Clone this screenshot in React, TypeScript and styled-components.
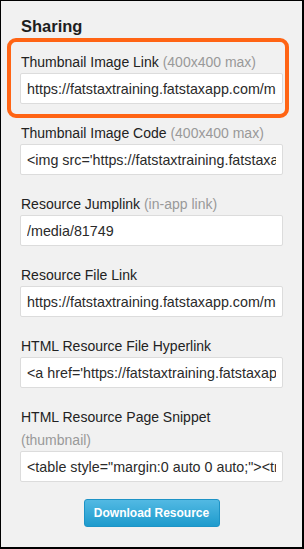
import React from 'react';
import styled, {createGlobalStyle} from 'styled-components';

const GlobalStyle = createGlobalStyle`
  html, body {
    margin: 0;
    padding: 0;
    background: #000;
  }
  body {
    font-family: "Liberation Sans", Arial, Helvetica, sans-serif;
  }
`

interface FieldData {
    label: string
    hint?: string
    value: string
    hintOnNewLine?: boolean
    highlighted?: boolean
}

const fields: FieldData[] = [
    {
        label: 'Thumbnail Image Link',
        hint: '(400x400 max)',
        value: 'https://fatstaxtraining.fatstaxapp.com/media/81749/thumbnail',
        highlighted: true,
    },
    {
        label: 'Thumbnail Image Code',
        hint: '(400x400 max)',
        value: "<img src='https://fatstaxtraining.fatstaxapp.com/media/81749/thumbnail' />",
    },
    {label: 'Resource Jumplink', hint: '(in-app link)', value: '/media/81749'},
    {label: 'Resource File Link', value: 'https://fatstaxtraining.fatstaxapp.com/media/81749/file'},
    {
        label: 'HTML Resource File Hyperlink',
        value: "<a href='https://fatstaxtraining.fatstaxapp.com/media/81749/file'>",
    },
    {
        label: 'HTML Resource Page Snippet',
        hint: '(thumbnail)',
        hintOnNewLine: true,
        value: '<table style="margin:0 auto 0 auto;"><tr><td>',
    },
]

const Field = ({field}: { field: FieldData }) => {
    const body = (
        <>
            <Label>
                {field.label}
                {field.hint && (field.hintOnNewLine ? <HintBlock>{field.hint}</HintBlock> : <Hint> {field.hint}</Hint>)}
            </Label>
            <TextInput type="text" readOnly value={field.value}/>
        </>
    )
    if (field.highlighted) return <Highlight>{body}</Highlight>
    return <FieldBox>{body}</FieldBox>
}

export default function App() {
    return (
        <>
            <GlobalStyle/>
            <Panel>
                <Title>Sharing</Title>
                <Fields>
                    {fields.map(f => <Field key={f.label} field={f}/>)}
                </Fields>
                <ButtonRow>
                    <DownloadButton type="button">Download Resource</DownloadButton>
                </ButtonRow>
            </Panel>
        </>
    );
}

const Panel = styled.div`
  box-sizing: border-box;
  width: 304px;
  height: 549px;
  background: #f1f1f1;
  border: 1px solid #000;
  border-right-width: 2px;
  border-bottom-width: 2px;
  padding: 15px 19px 0 19px;
  display: flex;
  flex-direction: column;
  overflow: hidden;
`
const Title = styled.h3`
  margin: 0 0 16px 1px;
  font-size: 16.5px;
  line-height: 20px;
  font-weight: bold;
  color: #1e1e1e;
`
const Fields = styled.div`
  display: flex;
  flex-direction: column;
  gap: 19px;
`
const FieldBox = styled.div`
  display: flex;
  flex-direction: column;
`
const Highlight = styled(FieldBox)`
  margin: -14px -6px -14px -13px;
  padding: 10px 2px 10px 9px;
  border: 4px solid #ff6414;
  border-radius: 9px;
`
const Label = styled.label`
  font-size: 14px;
  line-height: 20px;
  color: #222;
  margin: 0 0 1px 1px;
`
const Hint = styled.span`
  color: #999;
`
const HintBlock = styled.span`
  display: block;
  color: #999;
  margin-top: 3px;
`
const TextInput = styled.input`
  box-sizing: border-box;
  width: 100%;
  height: 31px;
  margin: 0;
  padding: 0 6px;
  border: 1px solid #dcdcdc;
  border-radius: 2px;
  background: #fff;
  font-family: "Liberation Sans", Arial, Helvetica, sans-serif;
  font-size: 14.3px;
  color: #2a2a2a;
  outline: none;
`
const ButtonRow = styled.div`
  display: flex;
  justify-content: center;
  margin-top: 17px;
`
const DownloadButton = styled.button`
  width: 136px;
  height: 28px;
  padding: 0;
  border: 1px solid #1d93c6;
  border-radius: 3px;
  background: linear-gradient(#52b9e3, #1e9bcd);
  color: #fff;
  font-family: "Liberation Sans", Arial, Helvetica, sans-serif;
  font-size: 12px;
  font-weight: bold;
  cursor: pointer;
`
